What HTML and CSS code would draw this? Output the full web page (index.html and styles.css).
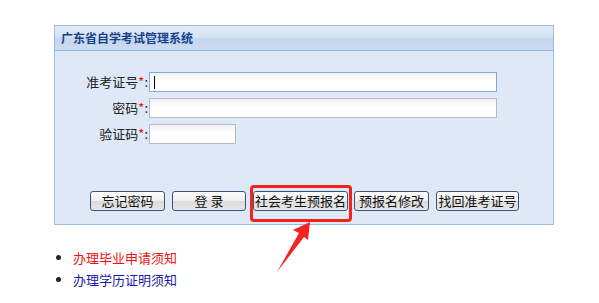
FILE: index.html
```html
<!DOCTYPE html>
<html lang="zh-CN">
<head>
<meta charset="utf-8">
<title>广东省自学考试管理系统</title>
<link rel="stylesheet" href="styles.css">
</head>
<body>
<div class="page">
  <div class="panel">
    <div class="panel-header">广东省自学考试管理系统</div>
    <div class="panel-body">
      <div class="form">
        <label class="lbl">准考证号<span class="req">*</span>:</label>
        <div><input class="inp wide focus" type="text"><span class="caret"></span></div>
        <label class="lbl">密码<span class="req">*</span>:</label>
        <div><input class="inp wide" type="password"></div>
        <label class="lbl">验证码<span class="req">*</span>:</label>
        <div><input class="inp short" type="text"></div>
      </div>
      <div class="buttons">
        <button class="btn b1">忘记密码</button>
        <button class="btn b2">登 录</button>
        <span class="hl"><button class="btn b3">社会考生预报名</button></span>
        <button class="btn b4">预报名修改</button>
        <button class="btn b5">找回准考证号</button>
      </div>
    </div>
  </div>
  <ul class="links">
    <li><a class="red" href="#">办理毕业申请须知</a></li>
    <li><a class="blue" href="#">办理学历证明须知</a></li>
  </ul>
  <svg class="arrow" width="599" height="303" viewBox="0 0 599 303">
    <polygon points="310,222 293,230 299,233 277,272 304,237 308,240" fill="#f5231f"/>
  </svg>
</div>
</body>
</html>
```
FILE: styles.css
```css
html, body { margin: 0; padding: 0; background: #fff; }
body {
  font-family: "Noto Sans CJK SC", "Liberation Sans", sans-serif;
  font-size: 13px;
  color: #222;
}
.page { position: relative; width: 599px; height: 303px; padding: 25px 0 0 54px; box-sizing: border-box; }
.panel {
  width: 500px;
  height: 200px;
  box-sizing: border-box;
  border: 1px solid #99bbe8;
  background: #dfe8f6;
  display: flex;
  flex-direction: column;
}
.panel-header {
  height: 25px;
  box-sizing: border-box;
  border-bottom: 1px solid #99bbe8;
  background: linear-gradient(#e3ecf8 0%, #d6e3f3 45%, #c4d6ee 55%, #cddcf1 100%);
  color: #15428b;
  font-weight: bold;
  font-size: 12px;
  line-height: 24px;
  padding-left: 6px;
}
.panel-body { flex: 1; display: flex; flex-direction: column; }
.form {
  display: grid;
  grid-template-columns: 94px 348px;
  row-gap: 6px;
  margin-top: 21px;
  align-items: center;
}
.lbl { text-align: right; padding-right: 1px; line-height: 20px; color: #222; }
.req { color: #f00; }
.form > div { position: relative; height: 20px; }
.inp {
  display: block;
  box-sizing: border-box;
  height: 20px;
  margin: 0;
  border: 1px solid #b5b8c8;
  background: linear-gradient(#f2f2f2, #fff 8px);
  padding: 0 3px;
  font: inherit;
  outline: none;
}
.inp.wide { width: 348px; }
.inp.short { width: 87px; }
.inp.focus { border-color: #7eadd9; }
.caret { position: absolute; left: 5px; top: 4px; width: 1px; height: 13px; background: #000; }
.buttons {
  display: flex;
  align-items: center;
  margin-top: 47px;
  padding-left: 35px;
}
.btn {
  height: 20px;
  box-sizing: border-box;
  margin: 0;
  padding: 0;
  border: 1px solid #3c5478;
  border-radius: 3px;
  background: linear-gradient(#fdfdfd 0%, #eeeeee 50%, #dcdcdc 51%, #e6e6e6 100%);
  font: inherit;
  font-size: 13px;
  line-height: 18px;
  color: #111;
}
.b1 { width: 75px; }
.b2 { width: 74px; margin-left: 7px; }
.hl { position: relative; display: inline-flex; margin-left: 7px; }
.hl::after {
  content: "";
  position: absolute;
  left: -3px;
  top: -6px;
  right: -4px;
  bottom: -11px;
  border: 3px solid #f3231c;
  border-radius: 4px;
  pointer-events: none;
}
.b3 { width: 95px; }
.b4 { width: 75px; margin-left: 6px; }
.b5 { width: 83px; margin-left: 7px; }
.links {
  margin: 0;
  padding: 0 0 0 19px;
  margin-top: 22px;
  line-height: 22px;
  font-size: 13px;
}
.links a { text-decoration: none; }
.red { color: #ee1111; }
.blue { color: #1a1aa8; }
.arrow { position: absolute; left: 0; top: 0; pointer-events: none; }
```
